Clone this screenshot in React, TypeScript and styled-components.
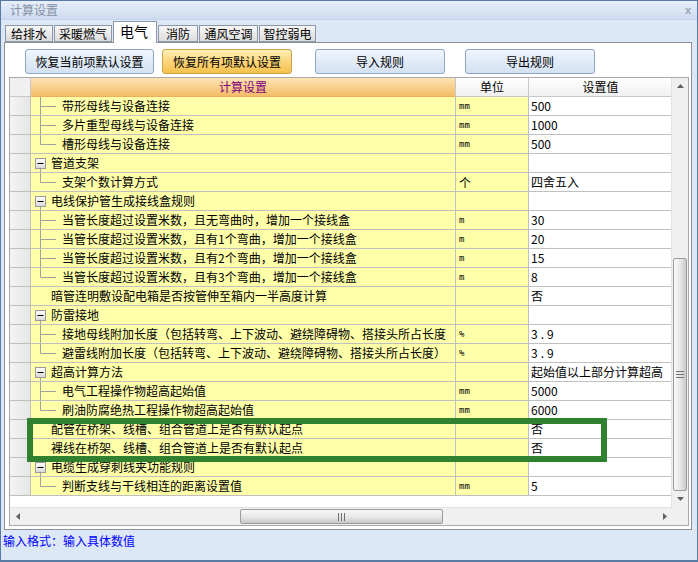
import React from "react";
import styled, { createGlobalStyle } from "styled-components";

type RowKind = "group" | "child" | "leaf";

interface SettingRow {
  kind: RowKind;
  label: string;
  unit?: string;
  value?: string;
  last?: boolean;
}

const rows: SettingRow[] = [
  { kind: "child", label: "带形母线与设备连接", unit: "mm", value: "500" },
  { kind: "child", label: "多片重型母线与设备连接", unit: "mm", value: "1000" },
  { kind: "child", label: "槽形母线与设备连接", unit: "mm", value: "500", last: true },
  { kind: "group", label: "管道支架" },
  { kind: "child", label: "支架个数计算方式", unit: "个", value: "四舍五入", last: true },
  { kind: "group", label: "电线保护管生成接线盒规则" },
  { kind: "child", label: "当管长度超过设置米数，且无弯曲时，增加一个接线盒", unit: "m", value: "30" },
  { kind: "child", label: "当管长度超过设置米数，且有1个弯曲，增加一个接线盒", unit: "m", value: "20" },
  { kind: "child", label: "当管长度超过设置米数，且有2个弯曲，增加一个接线盒", unit: "m", value: "15" },
  { kind: "child", label: "当管长度超过设置米数，且有3个弯曲，增加一个接线盒", unit: "m", value: "8", last: true },
  { kind: "leaf", label: "暗管连明敷设配电箱是否按管伸至箱内一半高度计算", value: "否" },
  { kind: "group", label: "防雷接地" },
  { kind: "child", label: "接地母线附加长度（包括转弯、上下波动、避绕障碍物、搭接头所占长度", unit: "%", value: "3.9" },
  { kind: "child", label: "避雷线附加长度（包括转弯、上下波动、避绕障碍物、搭接头所占长度）", unit: "%", value: "3.9", last: true },
  { kind: "group", label: "超高计算方法", value: "起始值以上部分计算超高" },
  { kind: "child", label: "电气工程操作物超高起始值", unit: "mm", value: "5000" },
  { kind: "child", label: "刷油防腐绝热工程操作物超高起始值", unit: "mm", value: "6000", last: true },
  { kind: "leaf", label: "配管在桥架、线槽、组合管道上是否有默认起点", value: "否" },
  { kind: "leaf", label: "裸线在桥架、线槽、组合管道上是否有默认起点", value: "否" },
  { kind: "group", label: "电缆生成穿刺线夹功能规则" },
  { kind: "child", label: "判断支线与干线相连的距离设置值", unit: "mm", value: "5", last: true },
];

const tabs = [
  { label: "给排水", width: 48 },
  { label: "采暖燃气", width: 58 },
  { label: "电气", width: 44, active: true },
  { label: "消防", width: 40 },
  { label: "通风空调", width: 59 },
  { label: "智控弱电", width: 57 },
];

const GlobalStyle = createGlobalStyle`
  html, body {
    margin: 0;
    padding: 0;
    background: #ffffff;
  }
  body {
    font-family: "Noto Sans CJK SC", "Liberation Sans", sans-serif;
    font-size: 12px;
  }
`;

const Expander = () => (
  <svg width="20" height="18" style={{ flexShrink: 0 }}>
    <defs>
      <linearGradient id="exp" x1="0" y1="0" x2="0" y2="1">
        <stop offset="0" stopColor="#ffffff" />
        <stop offset="1" stopColor="#d8d8d8" />
      </linearGradient>
    </defs>
    <line x1="9.5" y1="15" x2="9.5" y2="18" stroke="#a0a0a0" />
    <rect x="4.5" y="4.5" width="10" height="10" fill="url(#exp)" stroke="#9a9a9a" />
    <line x1="6.5" y1="9.5" x2="12.5" y2="9.5" stroke="#000" />
  </svg>
);

const Connector = ({ last }: { last?: boolean }) => (
  <svg width="31" height="18" style={{ flexShrink: 0 }}>
    <line x1="9.5" y1="0" x2="9.5" y2={last ? 9.5 : 18} stroke="#a0a0a0" />
    <line x1="9.5" y1="9.5" x2="25" y2="9.5" stroke="#a0a0a0" />
  </svg>
);

const App = () => {
  return (
    <>
      <GlobalStyle />
      <Window>
        <TitleBar>
          <Title>计算设置</Title>
          <Close>x</Close>
        </TitleBar>
        <TabStrip>
          {tabs.map((t) => (
            <Tab key={t.label} $active={t.active} $width={t.width}>
              {t.label}
            </Tab>
          ))}
        </TabStrip>
        <Panel>
          <ButtonRow>
            <ActionButton $width={129}>恢复当前项默认设置</ActionButton>
            <ActionButton $width={130} $primary>
              恢复所有项默认设置
            </ActionButton>
            <ActionButton $width={130} $gapLeft={15}>
              导入规则
            </ActionButton>
            <ActionButton $width={130} $gapLeft={12}>
              导出规则
            </ActionButton>
          </ButtonRow>
          <Grid>
            <GridMain>
              <TableArea>
                <HeaderRow>
                  <HeaderCorner />
                  <HeaderCell $accent>计算设置</HeaderCell>
                  <HeaderCell>单位</HeaderCell>
                  <HeaderCell>设置值</HeaderCell>
                </HeaderRow>
                {rows.map((r, i) => (
                  <DataRow key={i}>
                    <RowHead />
                    <TreeCell $leaf={r.kind === "leaf"}>
                      {r.kind === "group" && <Expander />}
                      {r.kind === "child" && <Connector last={r.last} />}
                      <Label>{r.label}</Label>
                    </TreeCell>
                    <UnitCell $cjk={r.unit === "个"}>{r.unit}</UnitCell>
                    <ValueCell $spaced={r.value === "3.9"}>{r.value}</ValueCell>
                  </DataRow>
                ))}
              </TableArea>
              <VScroll>
                <ArrowBox>
                  <svg width="7" height="4">
                    <polygon points="0,4 3.5,0 7,4" fill="#606060" />
                  </svg>
                </ArrowBox>
                <VTrack>
                  <VThumb>
                    <svg width="8" height="7">
                      <line x1="0" y1="0.5" x2="8" y2="0.5" stroke="#707070" />
                      <line x1="0" y1="3.5" x2="8" y2="3.5" stroke="#707070" />
                      <line x1="0" y1="6.5" x2="8" y2="6.5" stroke="#707070" />
                    </svg>
                  </VThumb>
                </VTrack>
                <ArrowBox>
                  <svg width="7" height="4">
                    <polygon points="0,0 3.5,4 7,0" fill="#606060" />
                  </svg>
                </ArrowBox>
              </VScroll>
            </GridMain>
            <HScrollRow>
              <HScroll>
                <HArrow>
                  <svg width="4" height="7">
                    <polygon points="4,0 0,3.5 4,7" fill="#606060" />
                  </svg>
                </HArrow>
                <HThumb>
                  <svg width="7" height="8">
                    <line x1="0.5" y1="0" x2="0.5" y2="8" stroke="#707070" />
                    <line x1="3.5" y1="0" x2="3.5" y2="8" stroke="#707070" />
                    <line x1="6.5" y1="0" x2="6.5" y2="8" stroke="#707070" />
                  </svg>
                </HThumb>
                <HArrow $end>
                  <svg width="4" height="7">
                    <polygon points="0,0 4,3.5 0,7" fill="#606060" />
                  </svg>
                </HArrow>
              </HScroll>
              <ScrollCorner />
            </HScrollRow>
          </Grid>
        </Panel>
        <StatusBar>输入格式：输入具体数值</StatusBar>
        <Highlight />
      </Window>
    </>
  );
};

export default App;

const Window = styled.div`
  position: relative;
  width: 698px;
  height: 562px;
  box-sizing: border-box;
  border: 1px solid #5a7aa6;
  border-bottom: 2px solid #5a7aa6;
  background: #dde8f7;
  display: flex;
  flex-direction: column;
  overflow: hidden;
`;

const TitleBar = styled.div`
  height: 18px;
  flex-shrink: 0;
  display: flex;
  align-items: center;
  justify-content: space-between;
  padding: 0 6px 0 9px;
  background: linear-gradient(#e6eef9, #cfdcf0);
  border-bottom: 1px solid #c4d3ea;
`;

const Title = styled.span`
  color: #8592a6;
  font-size: 12px;
  line-height: 18px;
`;

const Close = styled.span`
  color: #9aa3ad;
  font-family: "Liberation Sans", sans-serif;
  font-size: 11px;
  font-weight: bold;
`;

const TabStrip = styled.div`
  height: 22px;
  flex-shrink: 0;
  display: flex;
  align-items: flex-end;
  padding-left: 4px;
  gap: 1px;
  position: relative;
  z-index: 1;
`;

const Tab = styled.div<{ $active?: boolean; $width: number }>`
  width: ${({ $width }) => $width}px;
  box-sizing: border-box;
  height: ${({ $active }) => ($active ? 22 : 17)}px;
  margin-bottom: ${({ $active }) => ($active ? -1 : 0)}px;
  border: 1px solid #8c98a8;
  border-bottom: ${({ $active }) => ($active ? "none" : "1px solid #8c98a8")};
  background: ${({ $active }) =>
    $active ? "#ffffff" : "linear-gradient(#f7f7f7, #dcdcdc)"};
  color: #000;
  font-size: ${({ $active }) => ($active ? 14 : 12)}px;
  line-height: ${({ $active }) => ($active ? 18 : 15)}px;
  text-align: ${({ $active }) => ($active ? "left" : "center")};
  padding-left: ${({ $active }) => ($active ? 6 : 0)}px;
`;

const Panel = styled.div`
  margin: 0 5px 0 3px;
  height: 488px;
  flex-shrink: 0;
  box-sizing: border-box;
  border: 1px solid #8e9094;
  background: #ffffff;
  display: flex;
  flex-direction: column;
  padding: 6px 2px 3px 4px;
  gap: 3px;
`;

const ButtonRow = styled.div`
  display: flex;
  align-items: center;
  padding-left: 16px;
  gap: 8px;
`;

const ActionButton = styled.button<{ $width: number; $primary?: boolean; $gapLeft?: number }>`
  width: ${({ $width }) => $width}px;
  height: 25px;
  margin-left: ${({ $gapLeft }) => $gapLeft ?? 0}px;
  font-family: "Noto Sans CJK SC", sans-serif;
  font-size: 12px;
  color: #000;
  padding: 0;
  border-radius: 3px;
  border: 1px solid ${({ $primary }) => ($primary ? "#c9a24e" : "#8ea5c6")};
  background: ${({ $primary }) =>
    $primary
      ? "linear-gradient(#fdeeb4, #fbd57a 50%, #f7c04c)"
      : "linear-gradient(#f1f6fd, #e1ebf8 50%, #d3e1f3)"};
`;

const Grid = styled.div`
  flex: 1;
  border: 1px solid #a9a9a9;
  display: flex;
  flex-direction: column;
  overflow: hidden;
`;

const GridMain = styled.div`
  flex: 1;
  display: flex;
  min-height: 0;
`;

const TableArea = styled.div`
  width: 663px;
  overflow: hidden;
`;

const columns = "21px 425px 73px 144px";

const HeaderRow = styled.div`
  display: grid;
  grid-template-columns: ${columns};
  height: 19px;
`;

const HeaderCorner = styled.div`
  background: #f0f0f0;
  border-right: 1px solid #c8c8c8;
  border-bottom: 1px solid #c8c8c8;
`;

const HeaderCell = styled.div<{ $accent?: boolean }>`
  text-align: center;
  line-height: 18px;
  font-size: 12px;
  color: ${({ $accent }) => ($accent ? "#800080" : "#000")};
  background: ${({ $accent }) =>
    $accent ? "linear-gradient(#fde4b4, #f4bc66)" : "linear-gradient(#ffffff, #f0f0f0)"};
  border-right: 1px solid #c8c8c8;
  border-bottom: 1px solid ${({ $accent }) => ($accent ? "#eab060" : "#c8c8c8")};
`;

const DataRow = styled.div`
  display: grid;
  grid-template-columns: ${columns};
  height: 19px;
`;

const BaseCell = styled.div`
  box-sizing: border-box;
  border-right: 1px solid #c0c0c0;
  border-bottom: 1px solid #c0c0c0;
  height: 19px;
  overflow: hidden;
  white-space: nowrap;
`;

const RowHead = styled(BaseCell)`
  background: linear-gradient(90deg, #f4f4f4, #e6e6e6);
`;

const TreeCell = styled(BaseCell)<{ $leaf?: boolean }>`
  background: #ffffaa;
  display: flex;
  align-items: center;
  padding-left: ${({ $leaf }) => ($leaf ? 20 : 0)}px;
`;

const Label = styled.span`
  font-size: 12px;
  line-height: 18px;
  color: #000;
`;

const UnitCell = styled(BaseCell)<{ $cjk?: boolean }>`
  background: #ffffaa;
  padding-left: 3px;
  font-family: ${({ $cjk }) =>
    $cjk ? '"Noto Sans CJK SC", sans-serif' : '"DejaVu Sans Mono", monospace'};
  font-size: ${({ $cjk }) => ($cjk ? 12 : 9)}px;
  line-height: 19px;
`;

const ValueCell = styled(BaseCell)<{ $spaced?: boolean }>`
  background: #ffffff;
  padding-left: 2px;
  font-size: 12px;
  line-height: 18px;
  letter-spacing: ${({ $spaced }) => ($spaced ? 3 : 0)}px;
`;

const VScroll = styled.div`
  width: 16px;
  flex-shrink: 0;
  background: #f0f0f0;
  border-left: 1px solid #e2e2e2;
  display: flex;
  flex-direction: column;
`;

const ArrowBox = styled.div`
  height: 16px;
  display: flex;
  align-items: center;
  justify-content: center;
`;

const VTrack = styled.div`
  flex: 1;
  display: flex;
  flex-direction: column;
  justify-content: flex-end;
`;

const VThumb = styled.div`
  height: 233px;
  margin: 0 1px;
  box-sizing: border-box;
  border: 1px solid #9c9c9c;
  border-radius: 2px;
  background: linear-gradient(90deg, #fafafa, #e4e4e4 60%, #c8c8c8);
  display: flex;
  align-items: center;
  justify-content: center;
`;

const HScrollRow = styled.div`
  height: 18px;
  display: flex;
  flex-shrink: 0;
`;

const HScroll = styled.div`
  width: 663px;
  background: #f0f0f0;
  border-top: 1px solid #e2e2e2;
  display: flex;
  align-items: center;
`;

const HArrow = styled.div<{ $end?: boolean }>`
  width: 16px;
  height: 16px;
  display: flex;
  align-items: center;
  justify-content: center;
  margin-left: ${({ $end }) => ($end ? "auto" : "0")};
`;

const HThumb = styled.div`
  width: 203px;
  height: 15px;
  margin-left: 214px;
  box-sizing: border-box;
  border: 1px solid #9c9c9c;
  border-radius: 2px;
  background: linear-gradient(#fafafa, #e4e4e4 60%, #c8c8c8);
  display: flex;
  align-items: center;
  justify-content: center;
`;

const ScrollCorner = styled.div`
  flex: 1;
  background: #f0f0f0;
`;

const StatusBar = styled.div`
  flex: 1;
  padding: 3px 0 0 2px;
  color: #0000ff;
  font-size: 12px;
  line-height: 16px;
`;

const Highlight = styled.div`
  position: absolute;
  left: 26px;
  top: 417px;
  width: 580px;
  height: 44px;
  box-sizing: border-box;
  border: 6px solid #30812f;
  pointer-events: none;
`;
